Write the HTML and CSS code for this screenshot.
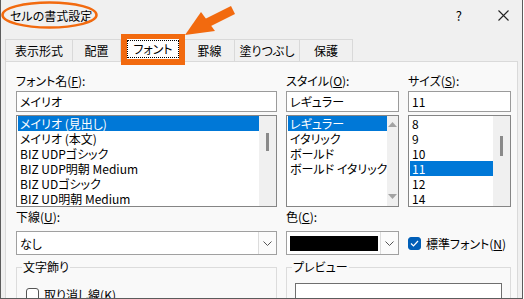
FILE: index.html
```html
<!DOCTYPE html>
<html lang="ja">
<head>
    <meta charset="UTF-8">
    <title>セルの書式設定</title>
    <link rel="stylesheet" href="styles.css">
</head>
<body>
    <div class="window">
        <div class="titlebar">
            <span class="title">セルの書式設定</span>
            <span class="help">?</span>
            <svg class="close" width="11" height="11" viewBox="0 0 11 11">
                <path d="M0.5 0.5 L10.5 10.5 M10.5 0.5 L0.5 10.5" stroke="#222" stroke-width="1.1" fill="none"/>
            </svg>
        </div>

        <div class="tabs">
            <div class="tab tab-first" style="width:68px">表示形式</div>
            <div class="tab" style="width:48px">配置</div>
            <div class="tab tab-active"><span class="focus">フォント</span></div>
            <div class="tab" style="width:50px">罫線</div>
            <div class="tab" style="width:65px">塗りつぶし</div>
            <div class="tab" style="width:53px">保護</div>
        </div>

        <div class="panel">
            <div class="font-grid">
                <div class="label">フォント名(<u>F</u>):</div>
                <div class="label">スタイル(<u>O</u>):</div>
                <div class="label">サイズ(<u>S</u>):</div>

                <div class="input">メイリオ</div>
                <div class="input">レギュラー</div>
                <div class="input">11</div>

                <div class="list">
                    <div class="items">
                        <div class="item selected">メイリオ (見出し)</div>
                        <div class="item">メイリオ (本文)</div>
                        <div class="item">BIZ UDPゴシック</div>
                        <div class="item">BIZ UDP明朝 Medium</div>
                        <div class="item">BIZ UDゴシック</div>
                        <div class="item">BIZ UD明朝 Medium</div>
                    </div>
                    <div class="scrollbar"><div class="thumb thumb-font"></div></div>
                </div>
                <div class="list">
                    <div class="items">
                        <div class="item selected">レギュラー</div>
                        <div class="item">イタリック</div>
                        <div class="item">ボールド</div>
                        <div class="item">ボールド イタリック</div>
                    </div>
                    <div class="scrollbar arrows">
                        <svg width="9" height="5" viewBox="0 0 9 5"><path d="M0 5 L4.5 0 L9 5 Z" fill="#a3a3a3"/></svg>
                        <svg width="9" height="5" viewBox="0 0 9 5"><path d="M0 0 L4.5 5 L9 0 Z" fill="#a3a3a3"/></svg>
                    </div>
                </div>
                <div class="list">
                    <div class="items">
                        <div class="item">8</div>
                        <div class="item">9</div>
                        <div class="item">10</div>
                        <div class="item selected">11</div>
                        <div class="item">12</div>
                        <div class="item">14</div>
                    </div>
                    <div class="scrollbar"><div class="thumb thumb-size"></div></div>
                </div>

                <div class="label label-low">下線(<u>U</u>):</div>
                <div class="label label-low">色(<u>C</u>):</div>
                <div></div>

                <div class="combo">
                    <span class="combo-text">なし</span>
                    <span class="drop">
                        <svg width="9" height="5" viewBox="0 0 9 5"><path d="M0.5 0.5 L4.5 4.5 L8.5 0.5" stroke="#555" fill="none"/></svg>
                    </span>
                </div>
                <div class="combo">
                    <span class="combo-text"><span class="swatch"></span></span>
                    <span class="drop">
                        <svg width="9" height="5" viewBox="0 0 9 5"><path d="M0.5 0.5 L4.5 4.5 L8.5 0.5" stroke="#555" fill="none"/></svg>
                    </span>
                </div>
                <div class="check-row">
                    <span class="check on">
                        <svg width="9" height="7" viewBox="0 0 9 7"><path d="M1 3.5 L3.5 6 L8 1" stroke="#fff" stroke-width="1.2" fill="none"/></svg>
                    </span>
                    <span>標準フォント(<u>N</u>)</span>
                </div>
            </div>

            <div class="bottom-grid">
                <fieldset class="group">
                    <legend>文字飾り</legend>
                    <div class="check-row deco">
                        <span class="check"></span>
                        <span>取り消し線(<u>K</u>)</span>
                    </div>
                </fieldset>
                <fieldset class="group">
                    <legend>プレビュー</legend>
                    <div class="preview"></div>
                </fieldset>
            </div>
        </div>

        <svg class="annot" width="524" height="70" viewBox="0 0 524 70">
            <ellipse cx="49.5" cy="15" rx="47" ry="12.5" fill="none" stroke="#f26a0f" stroke-width="2.5"/>
            <path d="M233 10 L207 23" stroke="#f26a0f" stroke-width="9" fill="none"/>
            <path d="M185 35 L201 12 L215 31 Z" fill="#f26a0f"/>
        </svg>
    </div>
</body>
</html>
```

FILE: styles.css
```css
body {
    margin: 0;
    font-family: "Noto Sans CJK JP", "Noto Sans", sans-serif;
    font-size: 12px;
    font-feature-settings: "palt";
    color: #000;
    background: #fff;
}

.window {
    position: relative;
    width: 523px;
    height: 299px;
    box-sizing: border-box;
    border: 1px solid #5c5c5c;
    border-top: none;
    background: #f0f0f0;
    overflow: hidden;
}

.titlebar {
    display: flex;
    align-items: center;
    height: 31px;
    padding-left: 9px;
}

.title {
    flex: 1;
}

.help {
    font-size: 13px;
    margin-right: 36px;
}

.close {
    margin-right: 13px;
}

.tabs {
    display: flex;
    align-items: flex-end;
    height: 22px;
    margin-top: 8px;
    padding-left: 4px;
}

.tab {
    height: 22px;
    box-sizing: border-box;
    border-top: 1px solid #d9d9d9;
    border-right: 1px solid #d9d9d9;
    display: flex;
    align-items: center;
    justify-content: center;
}

.tab-first {
    border-left: 1px solid #d9d9d9;
}

.tab-active {
    position: relative;
    z-index: 2;
    width: 64px;
    height: 31px;
    margin-bottom: -4px;
    border: 6px solid #f26a0f;
    border-top-width: 5px;
    background: #fff;
}

.focus {
    border: 1px dotted #000;
    padding: 0 5px;
    line-height: 16px;
}

.panel {
    width: 513px;
    height: 240px;
    box-sizing: border-box;
    margin-left: 4px;
    border: 1px solid #dadada;
    background: #f9f9f9;
    padding: 10px 0 0 10px;
}

.font-grid {
    display: grid;
    grid-template-columns: 261px 113px 103px;
    grid-template-rows: 19px 21px 95px 24px 24px;
    column-gap: 9px;
}

.label {
    line-height: 18px;
}

.label-low {
    padding-top: 1px;
}

.input {
    box-sizing: border-box;
    height: 21px;
    border: 1px solid #9b9b9b;
    background: #fff;
    padding-left: 3px;
    line-height: 19px;
}

.list {
    display: flex;
    box-sizing: border-box;
    height: 92px;
    margin-top: 3px;
    border: 1px solid #858585;
    background: #fff;
    padding-left: 1px;
}

.items {
    flex: 1;
}

.item {
    height: 15px;
    line-height: 15px;
    padding-left: 2px;
    white-space: nowrap;
}

.item.selected {
    background: #0078d7;
    color: #fff;
}

.scrollbar {
    width: 17px;
    background: #f0f0f0;
}

.thumb {
    width: 3px;
    height: 18px;
    margin-left: 7px;
    background: #8a8a8a;
}

.thumb-font {
    margin-top: 17px;
}

.thumb-size {
    margin-top: 20px;
    height: 20px;
}

.arrows {
    display: flex;
    flex-direction: column;
    align-items: center;
    justify-content: space-between;
    padding: 6px 0 7px;
    box-sizing: border-box;
}

.combo {
    display: flex;
    box-sizing: border-box;
    height: 24px;
    border: 1px solid #a0a0a0;
    background: #fff;
}

.combo-text {
    flex: 1;
    display: flex;
    align-items: center;
    padding-left: 3px;
}

.swatch {
    width: 88px;
    height: 15px;
    background: #000;
}

.drop {
    width: 17px;
    display: flex;
    align-items: center;
    justify-content: center;
    border-left: 1px solid #dcdcdc;
    background: #fbfbfb;
}

.check-row {
    display: flex;
    align-items: center;
    gap: 5px;
}

.check {
    width: 13px;
    height: 13px;
    box-sizing: border-box;
    border: 1px solid #555;
    border-radius: 3px;
    background: #fff;
    display: flex;
    align-items: center;
    justify-content: center;
}

.check.on {
    border-color: #005fb8;
    background: #005fb8;
}

.bottom-grid {
    display: grid;
    grid-template-columns: 261px 225px;
    column-gap: 9px;
    margin-top: 6px;
}

.group {
    margin: 0;
    padding: 0 8px;
    border: 1px solid #dcdcdc;
    min-width: 0;
}

.group legend {
    margin-left: -3px;
    padding: 0 1px;
    line-height: 12px;
}

.deco {
    margin-top: 13px;
    margin-left: 1px;
}

.preview {
    height: 40px;
    margin-top: 10px;
    border: 1px solid #6f6f6f;
    background: #fff;
}

.annot {
    position: absolute;
    left: -1px;
    top: 0;
    pointer-events: none;
}
```
